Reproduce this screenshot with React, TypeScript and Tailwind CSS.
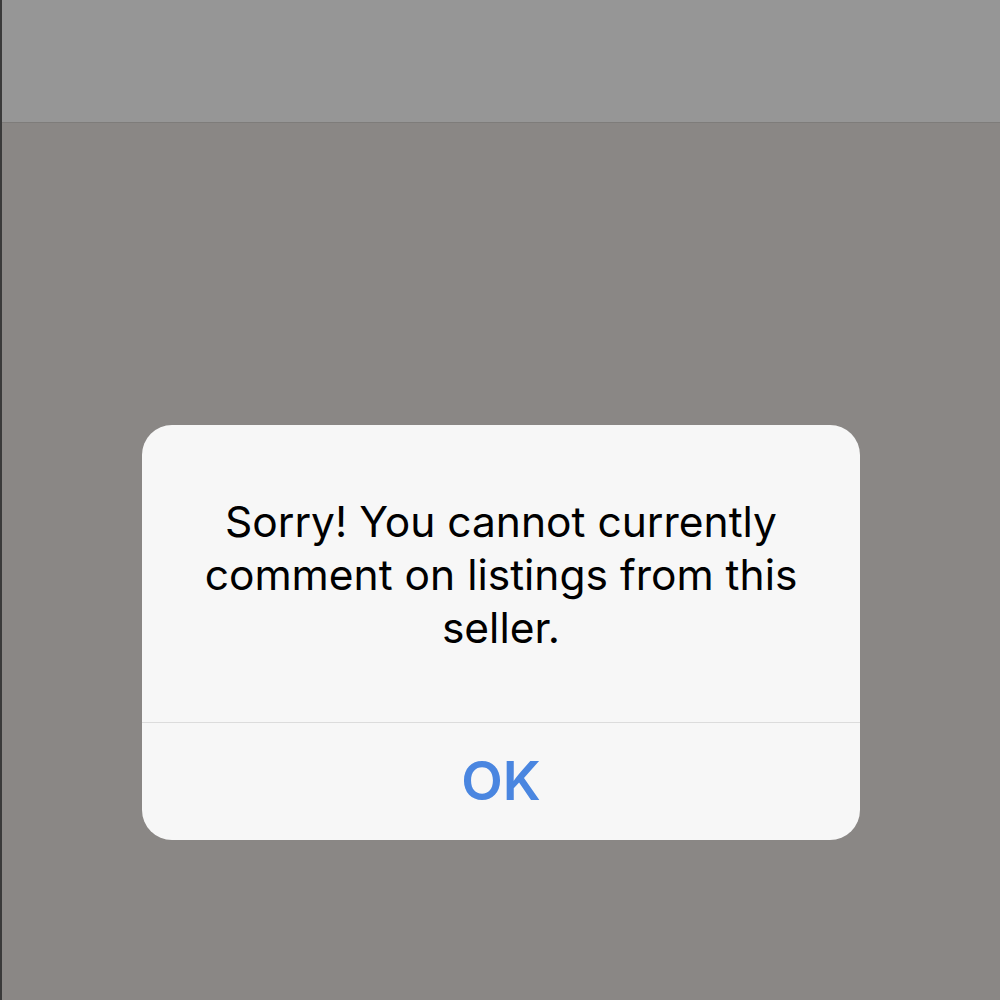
export default function App() {
  return (
    <div className="w-[1000px] h-[1000px] flex flex-col bg-[#8a8785] border-l-2 border-[#3a3a3a] overflow-hidden" style={{ fontFamily: 'Inter, "Liberation Sans", sans-serif' }}>
      {/* Top bar */}
      <div className="h-[123px] shrink-0 bg-[#969696] border-b border-[#7e7c7a]" />

      {/* Alert */}
      <div className="flex-1 flex flex-col items-center pt-[302px]">
        <div className="w-[718px] h-[415px] bg-[#f7f7f7] rounded-[30px] flex flex-col overflow-hidden">
          <div className="h-[297px] flex items-center justify-center px-10 pt-[2px]">
            <p className="text-center text-[42.5px] leading-[53px] text-black">
              Sorry! You cannot currently comment on listings from this seller.
            </p>
          </div>
          <div className="h-px bg-[#dcdcdc]" />
          <button className="flex-1 flex items-center justify-center text-[54px] font-semibold text-[#4a86e0] pb-[2px]">
            OK
          </button>
        </div>
      </div>
    </div>
  )
}
